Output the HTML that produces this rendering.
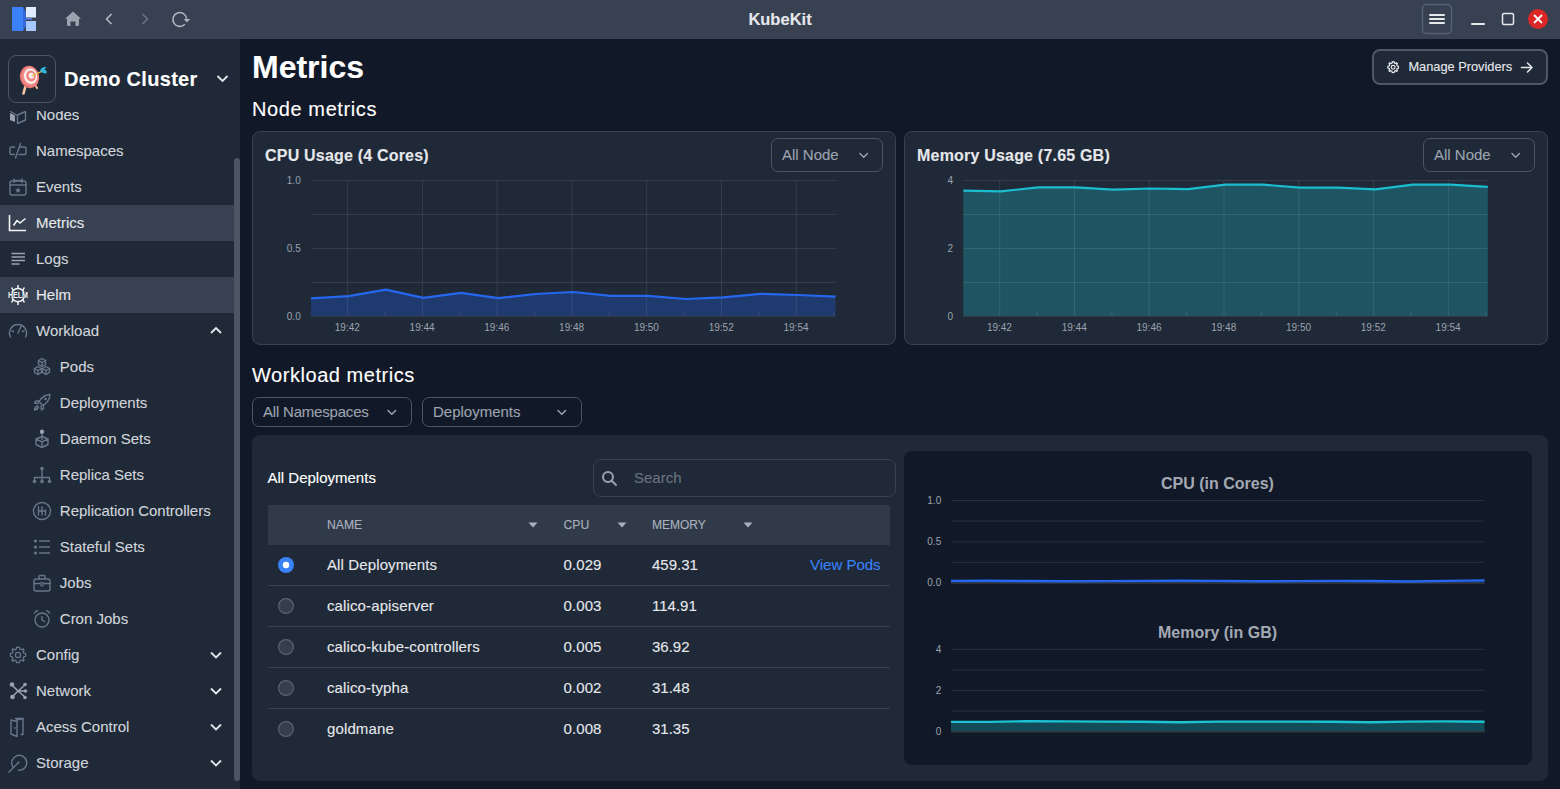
<!DOCTYPE html>
<html><head><meta charset="utf-8"><title>KubeKit</title>
<style>
html,body{margin:0;padding:0;}
body{width:1560px;height:789px;overflow:hidden;background:#111827;position:relative;font-family:"Liberation Sans",sans-serif;}
.t{position:absolute;white-space:nowrap;line-height:1;-webkit-text-stroke:0.12px currentColor;}
.n{-webkit-text-stroke:0;}
.b{position:absolute;box-sizing:border-box;}
svg.b{overflow:visible;}
</style></head><body>
<div class="b" style="left:0px;top:0px;width:1560px;height:39px;background:#374151"></div>
<svg class="b" style="left:0px;top:0px;" width="200" height="39" viewBox="0 0 200 39" >
<rect x="12" y="7" width="11" height="24" fill="#3b82f6"/>
<rect x="26" y="7" width="10" height="10.5" fill="#e0ecff"/>
<rect x="26" y="21" width="10" height="10" fill="#a5c8ff"/>
<path d="M23.5 17.5 L32 18.3 L32 19.8 L23.5 19.5 Z" fill="#5b82f0"/>
<path d="M23 7 L26 12 L26 26 L23 31 Z" fill="#3468d8"/>
<path d="M73 11.5 L65 18.8 L67 18.8 L67 24.5 Q67 26 68.5 26 L70.5 26 L70.5 21.5 L75.5 21.5 L75.5 26 L77.5 26 Q79 26 79 24.5 L79 18.8 L81 18.8 Z" fill="#9ca3af"/>
<path d="M111.5 14 L106.5 19 L111.5 24" fill="none" stroke="#b4bac4" stroke-width="1.6"/>
<path d="M142.5 14 L147.5 19 L142.5 24" fill="none" stroke="#6b7280" stroke-width="1.6"/>
<path d="M184.9 24.2 A6.9 6.9 0 1 1 186.7 18.6" fill="none" stroke="#aeb5c2" stroke-width="1.6"/>
<path d="M183.6 19 L190.1 19 L186.9 22.4 Z" fill="#aeb5c2"/>
</svg>
<div class="t" style="left:480.0px;width:600px;top:11.0px;font-size:16.5px;color:#e5e7eb;font-weight:bold;letter-spacing:0px;text-align:center">KubeKit</div>
<svg class="b" style="left:1410px;top:0px;" width="150" height="39" viewBox="0 0 150 39" >
<rect x="12.5" y="4.5" width="29" height="29" rx="4" fill="none" stroke="#556070" stroke-width="1.5"/>
<rect x="19" y="14" width="16" height="2" rx="1" fill="#e5e7eb"/>
<rect x="19" y="18" width="16" height="2" rx="1" fill="#e5e7eb"/>
<rect x="19" y="22" width="16" height="2" rx="1" fill="#e5e7eb"/>
<rect x="61" y="23" width="14" height="2" rx="1" fill="#e5e7eb"/>
<rect x="92.5" y="13.5" width="11" height="11" rx="1.5" fill="none" stroke="#e5e7eb" stroke-width="1.5"/>
<circle cx="128" cy="19" r="10" fill="#dc2626"/>
<path d="M124 15 L132 23 M132 15 L124 23" stroke="#fff" stroke-width="1.8"/>
</svg>
<div class="b" style="left:0px;top:39px;width:240px;height:750px;background:#1f2937"></div>
<div class="t" style="left:36.0px;top:106.5px;font-size:15px;color:#d1d5db;font-weight:normal;letter-spacing:0px;">Nodes</div>
<div class="t" style="left:36.0px;top:142.5px;font-size:15px;color:#d1d5db;font-weight:normal;letter-spacing:0px;">Namespaces</div>
<div class="t" style="left:36.0px;top:178.5px;font-size:15px;color:#d1d5db;font-weight:normal;letter-spacing:0px;">Events</div>
<div class="b" style="left:0px;top:205px;width:234px;height:36px;background:#374151"></div>
<div class="t" style="left:36.0px;top:214.5px;font-size:15px;color:#e5e7eb;font-weight:normal;letter-spacing:0px;">Metrics</div>
<div class="t" style="left:36.0px;top:250.5px;font-size:15px;color:#d1d5db;font-weight:normal;letter-spacing:0px;">Logs</div>
<div class="b" style="left:0px;top:277px;width:234px;height:36px;background:#374151"></div>
<div class="t" style="left:36.0px;top:286.5px;font-size:15px;color:#e5e7eb;font-weight:normal;letter-spacing:0px;">Helm</div>
<div class="t" style="left:36.0px;top:322.5px;font-size:15px;color:#d1d5db;font-weight:normal;letter-spacing:0px;">Workload</div>
<svg class="b" style="left:205px;top:323px;" width="20" height="16" viewBox="0 0 20 16" ><path d="M6 10 L11 5 L16 10" fill="none" stroke="#e5e7eb" stroke-width="1.8"/></svg>
<div class="t" style="left:59.8px;top:358.5px;font-size:15px;color:#d1d5db;font-weight:normal;letter-spacing:0px;">Pods</div>
<div class="t" style="left:59.8px;top:394.5px;font-size:15px;color:#d1d5db;font-weight:normal;letter-spacing:0px;">Deployments</div>
<div class="t" style="left:59.8px;top:430.5px;font-size:15px;color:#d1d5db;font-weight:normal;letter-spacing:0px;">Daemon Sets</div>
<div class="t" style="left:59.8px;top:466.5px;font-size:15px;color:#d1d5db;font-weight:normal;letter-spacing:0px;">Replica Sets</div>
<div class="t" style="left:59.8px;top:502.5px;font-size:15px;color:#d1d5db;font-weight:normal;letter-spacing:0px;">Replication Controllers</div>
<div class="t" style="left:59.8px;top:538.5px;font-size:15px;color:#d1d5db;font-weight:normal;letter-spacing:0px;">Stateful Sets</div>
<div class="t" style="left:59.8px;top:574.5px;font-size:15px;color:#d1d5db;font-weight:normal;letter-spacing:0px;">Jobs</div>
<div class="t" style="left:59.8px;top:610.5px;font-size:15px;color:#d1d5db;font-weight:normal;letter-spacing:0px;">Cron Jobs</div>
<div class="t" style="left:36.0px;top:646.5px;font-size:15px;color:#d1d5db;font-weight:normal;letter-spacing:0px;">Config</div>
<svg class="b" style="left:205px;top:647px;" width="20" height="16" viewBox="0 0 20 16" ><path d="M6 5.5 L11 10.5 L16 5.5" fill="none" stroke="#e5e7eb" stroke-width="1.8"/></svg>
<div class="t" style="left:36.0px;top:682.5px;font-size:15px;color:#d1d5db;font-weight:normal;letter-spacing:0px;">Network</div>
<svg class="b" style="left:205px;top:683px;" width="20" height="16" viewBox="0 0 20 16" ><path d="M6 5.5 L11 10.5 L16 5.5" fill="none" stroke="#e5e7eb" stroke-width="1.8"/></svg>
<div class="t" style="left:36.0px;top:718.5px;font-size:15px;color:#d1d5db;font-weight:normal;letter-spacing:0px;">Acess Control</div>
<svg class="b" style="left:205px;top:719px;" width="20" height="16" viewBox="0 0 20 16" ><path d="M6 5.5 L11 10.5 L16 5.5" fill="none" stroke="#e5e7eb" stroke-width="1.8"/></svg>
<div class="t" style="left:36.0px;top:754.5px;font-size:15px;color:#d1d5db;font-weight:normal;letter-spacing:0px;">Storage</div>
<svg class="b" style="left:205px;top:755px;" width="20" height="16" viewBox="0 0 20 16" ><path d="M6 5.5 L11 10.5 L16 5.5" fill="none" stroke="#e5e7eb" stroke-width="1.8"/></svg>
<svg class="b" style="left:6.0px;top:103.0px;" width="24" height="24" viewBox="0 0 24 24" ><path d="M4 10 L9 12.5 L9 19 L4 17 Z" fill="#9ca3af"/><path d="M4.5 8.5 L10.5 12" fill="none" stroke="#6a7689" stroke-width="1.4" stroke-linecap="round" stroke-linejoin="round" stroke-width="1.2"/><path d="M11.5 12 L19.5 8.5 L19.5 17 L11.5 20.5 Z" fill="none" stroke="#6a7689" stroke-width="1.4" stroke-linecap="round" stroke-linejoin="round" stroke-width="1.3"/></svg>
<svg class="b" style="left:6.0px;top:139.0px;" width="24" height="24" viewBox="0 0 24 24" ><path d="M8.5 8 L5.5 8 Q4 8 4 9.5 L4 14 Q4 15.5 5.5 15.5 L8.5 15.5" fill="none" stroke="#6a7689" stroke-width="1.4" stroke-linecap="round" stroke-linejoin="round"/><path d="M14.5 4.5 L9.5 19" fill="none" stroke="#6a7689" stroke-width="1.4" stroke-linecap="round" stroke-linejoin="round"/><path d="M14 8 L18.5 8 Q20 8 20 9.5 L20 14 Q20 15.5 18.5 15.5 L13 15.5" fill="none" stroke="#6a7689" stroke-width="1.4" stroke-linecap="round" stroke-linejoin="round"/></svg>
<svg class="b" style="left:6.0px;top:175.0px;" width="24" height="24" viewBox="0 0 24 24" ><rect x="4" y="6" width="16" height="14" rx="2" fill="none" stroke="#6a7689" stroke-width="1.4" stroke-linecap="round" stroke-linejoin="round"/><path d="M4 10 L20 10 M8 4 L8 7.5 M16 4 L16 7.5 M9 5.5 L15 5.5" fill="none" stroke="#6a7689" stroke-width="1.4" stroke-linecap="round" stroke-linejoin="round"/><path d="M12 12.3 L12.9 14.3 L15 14.5 L13.4 15.8 L13.9 17.8 L12 16.7 L10.1 17.8 L10.6 15.8 L9 14.5 L11.1 14.3 Z" fill="#6a7689"/></svg>
<svg class="b" style="left:6.0px;top:211.0px;" width="24" height="24" viewBox="0 0 24 24" ><path d="M3.5 4 L3.5 19.5 L20 19.5" fill="none" stroke="#f3f4f6" stroke-width="1.6"/><path d="M7.5 14.5 L11 9.5 L14 12 L19.5 7.5" fill="none" stroke="#f3f4f6" stroke-width="1.6" stroke-linejoin="round"/></svg>
<svg class="b" style="left:6.0px;top:247.0px;" width="24" height="24" viewBox="0 0 24 24" ><path d="M5.5 6.5 L19 6.5 M5.5 10 L19 10 M5.5 13.5 L19 13.5 M5.5 17 L13.5 17" fill="none" stroke="#9ca3af" stroke-width="1.3"/></svg>
<svg class="b" style="left:5.0px;top:283.0px;" width="26" height="24" viewBox="0 0 26 24" ><g stroke="#f3f4f6" stroke-width="1.5" fill="none"><path d="M7.1 9.6 A6.3 6.3 0 0 1 18.9 9.6"/><path d="M7.1 14.4 A6.3 6.3 0 0 0 18.9 14.4"/><path d="M13 2 L13 5.8 M13 18.2 L13 22 M8.4 7.7 L6.6 4.5 M17.6 7.7 L19.4 4.5 M8.4 16.3 L6.6 19.5 M17.6 16.3 L19.4 19.5"/></g><text x="3" y="15" textLength="20" lengthAdjust="spacingAndGlyphs" font-family="Liberation Sans" font-weight="bold" font-size="8.4" fill="#f3f4f6">HELM</text></svg>
<svg class="b" style="left:6.0px;top:319.0px;" width="24" height="24" viewBox="0 0 24 24" ><path d="M4.5 18 A8.5 8.5 0 1 1 19.5 18" fill="none" stroke="#6a7689" stroke-width="1.4" stroke-linecap="round" stroke-linejoin="round"/><path d="M12 14 L15 7.5" fill="none" stroke="#6a7689" stroke-width="1.4" stroke-linecap="round" stroke-linejoin="round"/><path d="M6 12 L7.5 12.5 M18 12 L16.5 12.5" fill="none" stroke="#6a7689" stroke-width="1.4" stroke-linecap="round" stroke-linejoin="round"/></svg>
<svg class="b" style="left:30.0px;top:355.0px;" width="24" height="24" viewBox="0 0 24 24" ><path d="M12 3.5 L15.5 5.5 L15.5 9.5 L12 11.5 L8.5 9.5 L8.5 5.5 Z M8 11.5 L11.5 13.5 L11.5 17.5 L8 19.5 L4.5 17.5 L4.5 13.5 Z M16 11.5 L19.5 13.5 L19.5 17.5 L16 19.5 L12.5 17.5 L12.5 13.5 Z" fill="none" stroke="#6a7689" stroke-width="1.4" stroke-linecap="round" stroke-linejoin="round"/><path d="M8.5 5.5 L12 7.5 L15.5 5.5 M12 7.5 L12 11.5 M4.5 13.5 L8 15.5 L11.5 13.5 M8 15.5 L8 19.5 M12.5 13.5 L16 15.5 L19.5 13.5 M16 15.5 L16 19.5" fill="none" stroke="#6a7689" stroke-width="1.4" stroke-linecap="round" stroke-linejoin="round" stroke-width="1"/></svg>
<svg class="b" style="left:30.0px;top:391.0px;" width="24" height="24" viewBox="0 0 24 24" ><path d="M20 3.5 Q13 4 9 10.5 L13 14.5 Q19.5 10.5 20 3.5 Z" fill="none" stroke="#6a7689" stroke-width="1.4" stroke-linecap="round" stroke-linejoin="round"/><path d="M9.5 10 L6 10 L4.5 12 L8.5 12.5 M13.5 14 L13.5 17.5 L11.5 19 L11 15" fill="none" stroke="#6a7689" stroke-width="1.4" stroke-linecap="round" stroke-linejoin="round"/><circle cx="15.5" cy="8" r="1.3" fill="#6a7689"/><path d="M7.5 15 Q5 15.5 4.5 19 Q8 18.5 8.5 16" fill="none" stroke="#6a7689" stroke-width="1.4" stroke-linecap="round" stroke-linejoin="round" fill="#9ca3af"/></svg>
<svg class="b" style="left:30.0px;top:427.0px;" width="24" height="24" viewBox="0 0 24 24" ><circle cx="12" cy="4.8" r="2.2" fill="#9ca3af"/><path d="M12 7 L12 12.5" fill="none" stroke="#6a7689" stroke-width="1.4" stroke-linecap="round" stroke-linejoin="round"/><path d="M6 12 L12 9.5 L18 12 L18 17.5 L12 20.5 L6 17.5 Z M6 12 L12 14.8 L18 12 M12 14.8 L12 20.5" fill="none" stroke="#6a7689" stroke-width="1.4" stroke-linecap="round" stroke-linejoin="round"/></svg>
<svg class="b" style="left:30.0px;top:463.0px;" width="24" height="24" viewBox="0 0 24 24" ><circle cx="12" cy="5.5" r="1.8" fill="#6a7689"/><circle cx="4.5" cy="18.5" r="1.8" fill="#6a7689"/><circle cx="12" cy="18.5" r="1.8" fill="#6a7689"/><circle cx="19.5" cy="18.5" r="1.8" fill="#6a7689"/><path d="M12 6 L12 18 M4.5 18 L4.5 14.5 L19.5 14.5 L19.5 18" fill="none" stroke="#6a7689" stroke-width="1.4" stroke-linecap="round" stroke-linejoin="round"/></svg>
<svg class="b" style="left:30.0px;top:499.0px;" width="24" height="24" viewBox="0 0 24 24" ><circle cx="12" cy="12" r="8.5" fill="none" stroke="#6a7689" stroke-width="1.4" stroke-linecap="round" stroke-linejoin="round"/><path d="M8.5 8 L8.5 16 M12 8 L12 16 M15.5 11 L15.5 16 M8.5 12 L15.5 12" fill="none" stroke="#6a7689" stroke-width="1.4" stroke-linecap="round" stroke-linejoin="round"/></svg>
<svg class="b" style="left:30.0px;top:535.0px;" width="24" height="24" viewBox="0 0 24 24" ><circle cx="5.5" cy="6" r="1.6" fill="#6a7689"/><circle cx="5.5" cy="12" r="1.6" fill="#6a7689"/><circle cx="5.5" cy="18" r="1.6" fill="#6a7689"/><path d="M9.5 6 L19.5 6 M9.5 12 L19.5 12 M9.5 18 L19.5 18" fill="none" stroke="#6a7689" stroke-width="1.4" stroke-linecap="round" stroke-linejoin="round"/></svg>
<svg class="b" style="left:30.0px;top:571.0px;" width="24" height="24" viewBox="0 0 24 24" ><rect x="4" y="8" width="16" height="12" rx="2" fill="none" stroke="#6a7689" stroke-width="1.4" stroke-linecap="round" stroke-linejoin="round"/><path d="M9 8 L9 5.5 Q9 4.5 10 4.5 L14 4.5 Q15 4.5 15 5.5 L15 8 M4 12.5 L20 12.5" fill="none" stroke="#6a7689" stroke-width="1.4" stroke-linecap="round" stroke-linejoin="round"/><rect x="10.8" y="11.5" width="2.4" height="3.5" rx="0.8" fill="#1f2937" stroke="#6a7689" stroke-width="1.1"/></svg>
<svg class="b" style="left:30.0px;top:607.0px;" width="24" height="24" viewBox="0 0 24 24" ><circle cx="12" cy="13" r="7" fill="none" stroke="#6a7689" stroke-width="1.4" stroke-linecap="round" stroke-linejoin="round"/><path d="M12 9.5 L12 13 L14.5 14.5 M4.5 6 Q5.5 4 7.5 3.8 M19.5 6 Q18.5 4 16.5 3.8" fill="none" stroke="#6a7689" stroke-width="1.4" stroke-linecap="round" stroke-linejoin="round"/></svg>
<svg class="b" style="left:6.0px;top:643.0px;" width="24" height="24" viewBox="0 0 24 24" ><g transform="translate(12 12) scale(0.9) translate(-12 -12)"><path d="M12 3.2 L13.6 3.4 L14.1 5.5 L15.6 6.2 L17.4 5 L18.7 6.3 L17.6 8.1 L18.3 9.8 L20.4 10.3 L20.6 12 L20.4 13.6 L18.3 14.1 L17.6 15.8 L18.8 17.6 L17.6 18.8 L15.8 17.6 L14.1 18.3 L13.6 20.4 L12 20.6 L10.4 20.4 L9.9 18.3 L8.2 17.6 L6.4 18.8 L5.2 17.6 L6.4 15.8 L5.7 14.1 L3.6 13.6 L3.4 12 L3.6 10.4 L5.7 9.9 L6.4 8.1 L5.3 6.3 L6.5 5.1 L8.3 6.3 L9.9 5.6 L10.4 3.4 Z" fill="none" stroke="#6a7689" stroke-width="1.4" stroke-linecap="round" stroke-linejoin="round" stroke-width="1.3"/><circle cx="12" cy="12" r="2.9" fill="none" stroke="#6a7689" stroke-width="1.4" stroke-linecap="round" stroke-linejoin="round" stroke-width="1.4"/></g></svg>
<svg class="b" style="left:6.0px;top:679.0px;" width="24" height="24" viewBox="0 0 24 24" ><path d="M6 6 L12 12 L6 18 M12 12 L19 6 M12 12 L19.5 12 M12 12 L19 18" fill="none" stroke="#9ca3af" stroke-width="1.5"/><circle cx="6" cy="5.5" r="2.3" fill="#9ca3af"/><circle cx="6.5" cy="18" r="2.3" fill="#9ca3af"/><circle cx="19" cy="5.5" r="1.8" fill="#9ca3af"/><circle cx="19.5" cy="12" r="1.8" fill="#9ca3af"/><circle cx="19" cy="18.5" r="1.8" fill="#9ca3af"/></svg>
<svg class="b" style="left:6.0px;top:715.0px;" width="24" height="24" viewBox="0 0 24 24" ><path d="M10.5 5 L17 3.5 L17 19.5 L15 19.5 M5 5 L5 19 L11 21.5 L11 6.5 Z" fill="none" stroke="#6a7689" stroke-width="1.4" stroke-linecap="round" stroke-linejoin="round"/><path d="M9.5 3.5 L17 3.5" fill="none" stroke="#6a7689" stroke-width="1.4" stroke-linecap="round" stroke-linejoin="round"/><circle cx="8.8" cy="13" r="0.9" fill="#6a7689"/></svg>
<svg class="b" style="left:6.0px;top:751.0px;" width="24" height="24" viewBox="0 0 24 24" ><path d="M7 16 A7.5 7.5 0 1 1 12.5 19.3" fill="none" stroke="#6a7689" stroke-width="1.4" stroke-linecap="round" stroke-linejoin="round"/><circle cx="12.5" cy="11.5" r="1" fill="#6a7689"/><path d="M12 12 L3 21" fill="none" stroke="#6a7689" stroke-width="1.4" stroke-linecap="round" stroke-linejoin="round" stroke="#9ca3af"/></svg>
<div class="b" style="left:234px;top:158px;width:6px;height:623px;background:#4b5563;border-radius:3px"></div>
<div class="b" style="left:0px;top:39px;width:234px;height:72px;background:#1f2937"></div>
<div class="b" style="left:8px;top:55px;width:48px;height:48px;border:1px solid #4b5563;border-radius:8px"></div>
<div class="t" style="left:64.0px;top:68.9px;font-size:20px;color:#ffffff;font-weight:bold;letter-spacing:0.3px;">Demo Cluster</div>
<svg class="b" style="left:210px;top:70px;" width="24" height="16" viewBox="0 0 24 16" ><path d="M7.5 6 L12.5 11 L17.5 6" fill="none" stroke="#e5e7eb" stroke-width="1.8"/></svg>
<div class="t" style="left:252.0px;top:50.9px;font-size:32px;color:#ffffff;font-weight:bold;letter-spacing:0px;">Metrics</div>
<div class="b" style="left:1372px;top:49px;width:176px;height:36px;background:#1f2937;border:2px solid #4f5866;border-radius:8px"></div>
<div class="t" style="left:1408.4px;top:61.2px;font-size:12.8px;color:#e5e7eb;font-weight:normal;letter-spacing:0px;">Manage Providers</div>
<div class="t" style="left:252.0px;top:98.6px;font-size:20px;color:#ffffff;font-weight:normal;letter-spacing:0.6px;">Node metrics</div>
<div class="b" style="left:252px;top:131px;width:644px;height:214px;background:#1f2937;border:1px solid #374151;border-radius:8px"></div>
<div class="b" style="left:904px;top:131px;width:644px;height:214px;background:#1f2937;border:1px solid #374151;border-radius:8px"></div>
<div class="t" style="left:265.0px;top:147.5px;font-size:16px;color:#e5e7eb;font-weight:bold;letter-spacing:0.2px;">CPU Usage (4 Cores)</div>
<div class="t" style="left:917.0px;top:147.5px;font-size:16px;color:#e5e7eb;font-weight:bold;letter-spacing:0.2px;">Memory Usage (7.65 GB)</div>
<div class="b" style="left:771px;top:138px;width:112px;height:34px;border:1px solid #4b5563;border-radius:7px"></div>
<div class="b" style="left:1423px;top:138px;width:112px;height:34px;border:1px solid #4b5563;border-radius:7px"></div>
<div class="t" style="left:782.0px;top:147.3px;font-size:15px;color:#9ca3af;font-weight:normal;letter-spacing:0px;">All Node</div>
<div class="t" style="left:1434.0px;top:147.3px;font-size:15px;color:#9ca3af;font-weight:normal;letter-spacing:0px;">All Node</div>
<div class="t" style="left:252.0px;top:365.1px;font-size:20px;color:#ffffff;font-weight:normal;letter-spacing:0.55px;">Workload metrics</div>
<div class="b" style="left:252px;top:397px;width:160px;height:30px;border:1px solid #4b5563;border-radius:7px"></div>
<div class="b" style="left:422px;top:397px;width:160px;height:30px;border:1px solid #4b5563;border-radius:7px"></div>
<div class="t" style="left:263.0px;top:403.6px;font-size:15px;color:#9ca3af;font-weight:normal;letter-spacing:-0.2px;">All Namespaces</div>
<div class="t" style="left:433.0px;top:403.6px;font-size:15px;color:#9ca3af;font-weight:normal;letter-spacing:0px;">Deployments</div>
<div class="b" style="left:252px;top:435px;width:1296px;height:346px;background:#1f2937;border-radius:8px"></div>
<div class="t" style="left:267.5px;top:469.9px;font-size:15px;color:#ffffff;font-weight:normal;letter-spacing:0px;">All Deployments</div>
<div class="b" style="left:593px;top:459px;width:303px;height:38px;border:1px solid #374151;border-radius:8px"></div>
<div class="t" style="left:634.0px;top:469.7px;font-size:15px;color:#6b7280;font-weight:normal;letter-spacing:0px;">Search</div>
<div class="b" style="left:268px;top:505px;width:622px;height:40px;background:#303a49"></div>
<div class="t" style="left:327.0px;top:518.9px;font-size:12.2px;color:#aab1bd;font-weight:normal;letter-spacing:0px;">NAME</div>
<div class="t" style="left:563.5px;top:518.9px;font-size:12.2px;color:#aab1bd;font-weight:normal;letter-spacing:0px;">CPU</div>
<div class="t" style="left:652.0px;top:519.0px;font-size:12px;color:#aab1bd;font-weight:normal;letter-spacing:0px;">MEMORY</div>
<div class="t" style="left:327.0px;top:557.3px;font-size:15px;color:#e5e7eb;font-weight:normal;letter-spacing:0.12px;">All Deployments</div>
<div class="t" style="left:563.5px;top:557.3px;font-size:15px;color:#e5e7eb;font-weight:normal;letter-spacing:0.1px;">0.029</div>
<div class="t" style="left:652.0px;top:557.3px;font-size:15px;color:#e5e7eb;font-weight:normal;letter-spacing:0px;">459.31</div>
<div class="b" style="left:268px;top:585px;width:622px;height:1px;background:#374151"></div>
<div class="t" style="left:327.0px;top:598.3px;font-size:15px;color:#e5e7eb;font-weight:normal;letter-spacing:0.12px;">calico-apiserver</div>
<div class="t" style="left:563.5px;top:598.3px;font-size:15px;color:#e5e7eb;font-weight:normal;letter-spacing:0.1px;">0.003</div>
<div class="t" style="left:652.0px;top:598.3px;font-size:15px;color:#e5e7eb;font-weight:normal;letter-spacing:0px;">114.91</div>
<div class="b" style="left:268px;top:626px;width:622px;height:1px;background:#374151"></div>
<div class="t" style="left:327.0px;top:639.3px;font-size:15px;color:#e5e7eb;font-weight:normal;letter-spacing:0.12px;">calico-kube-controllers</div>
<div class="t" style="left:563.5px;top:639.3px;font-size:15px;color:#e5e7eb;font-weight:normal;letter-spacing:0.1px;">0.005</div>
<div class="t" style="left:652.0px;top:639.3px;font-size:15px;color:#e5e7eb;font-weight:normal;letter-spacing:0px;">36.92</div>
<div class="b" style="left:268px;top:667px;width:622px;height:1px;background:#374151"></div>
<div class="t" style="left:327.0px;top:680.3px;font-size:15px;color:#e5e7eb;font-weight:normal;letter-spacing:0.12px;">calico-typha</div>
<div class="t" style="left:563.5px;top:680.3px;font-size:15px;color:#e5e7eb;font-weight:normal;letter-spacing:0.1px;">0.002</div>
<div class="t" style="left:652.0px;top:680.3px;font-size:15px;color:#e5e7eb;font-weight:normal;letter-spacing:0px;">31.48</div>
<div class="b" style="left:268px;top:708px;width:622px;height:1px;background:#374151"></div>
<div class="t" style="left:327.0px;top:721.3px;font-size:15px;color:#e5e7eb;font-weight:normal;letter-spacing:0.12px;">goldmane</div>
<div class="t" style="left:563.5px;top:721.3px;font-size:15px;color:#e5e7eb;font-weight:normal;letter-spacing:0.1px;">0.008</div>
<div class="t" style="left:652.0px;top:721.3px;font-size:15px;color:#e5e7eb;font-weight:normal;letter-spacing:0px;">31.35</div>
<div class="t" style="left:810.0px;top:557.3px;font-size:15px;color:#3b82f6;font-weight:normal;letter-spacing:0px;">View Pods</div>
<div class="b" style="left:904px;top:451px;width:628px;height:314px;background:#111827;border-radius:8px"></div>
<div class="t n" style="left:917.5px;width:600px;top:475.8px;font-size:16px;color:#a3a9b3;font-weight:bold;letter-spacing:0px;text-align:center">CPU (in Cores)</div>
<div class="t n" style="left:917.5px;width:600px;top:624.5px;font-size:16px;color:#a3a9b3;font-weight:bold;letter-spacing:0px;text-align:center">Memory (in GB)</div>
<svg class="b" style="left:0px;top:0px;pointer-events:none" width="1560" height="789" viewBox="0 0 1560 789" ><path d="M311.0 298.4 L348.5 296.1 L385.9 289.7 L423.4 297.8 L460.9 292.9 L498.3 298.1 L535.8 294.0 L573.2 292.0 L610.7 295.8 L648.2 295.8 L685.6 299.0 L723.1 297.3 L760.6 293.8 L798.0 295.0 L835.5 296.7 L835.5 316 L311.0 316 Z" fill="#1e3a6e"/><line x1="311" y1="180.5" x2="835.5" y2="180.5" stroke="rgba(255,255,255,0.095)" stroke-width="1"/><line x1="311" y1="214.5" x2="835.5" y2="214.5" stroke="rgba(255,255,255,0.095)" stroke-width="1"/><line x1="311" y1="248.5" x2="835.5" y2="248.5" stroke="rgba(255,255,255,0.095)" stroke-width="1"/><line x1="311" y1="282.5" x2="835.5" y2="282.5" stroke="rgba(255,255,255,0.095)" stroke-width="1"/><line x1="311" y1="316.5" x2="835.5" y2="316.5" stroke="rgba(255,255,255,0.095)" stroke-width="1"/><line x1="347.6" y1="180" x2="347.6" y2="316" stroke="rgba(255,255,255,0.095)" stroke-width="1"/><line x1="422.4" y1="180" x2="422.4" y2="316" stroke="rgba(255,255,255,0.095)" stroke-width="1"/><line x1="497.1" y1="180" x2="497.1" y2="316" stroke="rgba(255,255,255,0.095)" stroke-width="1"/><line x1="571.9" y1="180" x2="571.9" y2="316" stroke="rgba(255,255,255,0.095)" stroke-width="1"/><line x1="646.7" y1="180" x2="646.7" y2="316" stroke="rgba(255,255,255,0.095)" stroke-width="1"/><line x1="721.5" y1="180" x2="721.5" y2="316" stroke="rgba(255,255,255,0.095)" stroke-width="1"/><line x1="796.3" y1="180" x2="796.3" y2="316" stroke="rgba(255,255,255,0.095)" stroke-width="1"/><line x1="385.0" y1="312" x2="385.0" y2="316" stroke="rgba(255,255,255,0.095)" stroke-width="1"/><line x1="459.8" y1="312" x2="459.8" y2="316" stroke="rgba(255,255,255,0.095)" stroke-width="1"/><line x1="534.5" y1="312" x2="534.5" y2="316" stroke="rgba(255,255,255,0.095)" stroke-width="1"/><line x1="609.3" y1="312" x2="609.3" y2="316" stroke="rgba(255,255,255,0.095)" stroke-width="1"/><line x1="684.1" y1="312" x2="684.1" y2="316" stroke="rgba(255,255,255,0.095)" stroke-width="1"/><line x1="758.9" y1="312" x2="758.9" y2="316" stroke="rgba(255,255,255,0.095)" stroke-width="1"/><line x1="833.7" y1="312" x2="833.7" y2="316" stroke="rgba(255,255,255,0.095)" stroke-width="1"/><path d="M311.0 298.4 L348.5 296.1 L385.9 289.7 L423.4 297.8 L460.9 292.9 L498.3 298.1 L535.8 294.0 L573.2 292.0 L610.7 295.8 L648.2 295.8 L685.6 299.0 L723.1 297.3 L760.6 293.8 L798.0 295.0 L835.5 296.7" fill="none" stroke="#2667f0" stroke-width="2.2" stroke-linejoin="round"/><line x1="311" y1="316.5" x2="835.5" y2="316.5" stroke="#35373a" stroke-width="1.2"/></svg>
<div class="t n" style="right:1259.3px;top:176.1px;font-size:10px;color:#9ca3af;font-weight:normal;letter-spacing:0px;text-align:right">1.0</div>
<div class="t n" style="right:1259.3px;top:244.1px;font-size:10px;color:#9ca3af;font-weight:normal;letter-spacing:0px;text-align:right">0.5</div>
<div class="t n" style="right:1259.3px;top:312.1px;font-size:10px;color:#9ca3af;font-weight:normal;letter-spacing:0px;text-align:right">0.0</div>
<div class="t n" style="left:47.3px;width:600px;top:323.1px;font-size:10px;color:#9ca3af;font-weight:normal;letter-spacing:0px;text-align:center">19:42</div>
<div class="t n" style="left:122.1px;width:600px;top:323.1px;font-size:10px;color:#9ca3af;font-weight:normal;letter-spacing:0px;text-align:center">19:44</div>
<div class="t n" style="left:196.8px;width:600px;top:323.1px;font-size:10px;color:#9ca3af;font-weight:normal;letter-spacing:0px;text-align:center">19:46</div>
<div class="t n" style="left:271.6px;width:600px;top:323.1px;font-size:10px;color:#9ca3af;font-weight:normal;letter-spacing:0px;text-align:center">19:48</div>
<div class="t n" style="left:346.4px;width:600px;top:323.1px;font-size:10px;color:#9ca3af;font-weight:normal;letter-spacing:0px;text-align:center">19:50</div>
<div class="t n" style="left:421.2px;width:600px;top:323.1px;font-size:10px;color:#9ca3af;font-weight:normal;letter-spacing:0px;text-align:center">19:52</div>
<div class="t n" style="left:496.0px;width:600px;top:323.1px;font-size:10px;color:#9ca3af;font-weight:normal;letter-spacing:0px;text-align:center">19:54</div>
<svg class="b" style="left:0px;top:0px;pointer-events:none" width="1560" height="789" viewBox="0 0 1560 789" ><path d="M963.3 190.6 L1000.8 191.4 L1038.2 187.3 L1075.7 187.3 L1113.2 189.7 L1150.6 188.5 L1188.1 189.1 L1225.5 184.7 L1263.0 184.7 L1300.5 187.6 L1337.9 187.6 L1375.4 189.4 L1412.9 184.7 L1450.3 184.7 L1487.8 186.8 L1487.8 316 L963.3 316 Z" fill="#1f5563"/><line x1="963.3" y1="180.5" x2="1487.8" y2="180.5" stroke="rgba(255,255,255,0.095)" stroke-width="1"/><line x1="963.3" y1="214.5" x2="1487.8" y2="214.5" stroke="rgba(255,255,255,0.095)" stroke-width="1"/><line x1="963.3" y1="248.5" x2="1487.8" y2="248.5" stroke="rgba(255,255,255,0.095)" stroke-width="1"/><line x1="963.3" y1="282.5" x2="1487.8" y2="282.5" stroke="rgba(255,255,255,0.095)" stroke-width="1"/><line x1="963.3" y1="316.5" x2="1487.8" y2="316.5" stroke="rgba(255,255,255,0.095)" stroke-width="1"/><line x1="999.7" y1="180" x2="999.7" y2="316" stroke="rgba(255,255,255,0.095)" stroke-width="1"/><line x1="1074.5" y1="180" x2="1074.5" y2="316" stroke="rgba(255,255,255,0.095)" stroke-width="1"/><line x1="1149.2" y1="180" x2="1149.2" y2="316" stroke="rgba(255,255,255,0.095)" stroke-width="1"/><line x1="1224.0" y1="180" x2="1224.0" y2="316" stroke="rgba(255,255,255,0.095)" stroke-width="1"/><line x1="1298.8" y1="180" x2="1298.8" y2="316" stroke="rgba(255,255,255,0.095)" stroke-width="1"/><line x1="1373.6" y1="180" x2="1373.6" y2="316" stroke="rgba(255,255,255,0.095)" stroke-width="1"/><line x1="1448.4" y1="180" x2="1448.4" y2="316" stroke="rgba(255,255,255,0.095)" stroke-width="1"/><line x1="1037.1" y1="312" x2="1037.1" y2="316" stroke="rgba(255,255,255,0.095)" stroke-width="1"/><line x1="1111.9" y1="312" x2="1111.9" y2="316" stroke="rgba(255,255,255,0.095)" stroke-width="1"/><line x1="1186.6" y1="312" x2="1186.6" y2="316" stroke="rgba(255,255,255,0.095)" stroke-width="1"/><line x1="1261.4" y1="312" x2="1261.4" y2="316" stroke="rgba(255,255,255,0.095)" stroke-width="1"/><line x1="1336.2" y1="312" x2="1336.2" y2="316" stroke="rgba(255,255,255,0.095)" stroke-width="1"/><line x1="1411.0" y1="312" x2="1411.0" y2="316" stroke="rgba(255,255,255,0.095)" stroke-width="1"/><line x1="1485.8" y1="312" x2="1485.8" y2="316" stroke="rgba(255,255,255,0.095)" stroke-width="1"/><path d="M963.3 190.6 L1000.8 191.4 L1038.2 187.3 L1075.7 187.3 L1113.2 189.7 L1150.6 188.5 L1188.1 189.1 L1225.5 184.7 L1263.0 184.7 L1300.5 187.6 L1337.9 187.6 L1375.4 189.4 L1412.9 184.7 L1450.3 184.7 L1487.8 186.8" fill="none" stroke="#1bbdd0" stroke-width="2.2" stroke-linejoin="round"/><line x1="963.3" y1="316.5" x2="1487.8" y2="316.5" stroke="#35373a" stroke-width="1.2"/></svg>
<div class="t n" style="right:607.0px;top:176.1px;font-size:10px;color:#9ca3af;font-weight:normal;letter-spacing:0px;text-align:right">4</div>
<div class="t n" style="right:607.0px;top:244.1px;font-size:10px;color:#9ca3af;font-weight:normal;letter-spacing:0px;text-align:right">2</div>
<div class="t n" style="right:607.0px;top:312.1px;font-size:10px;color:#9ca3af;font-weight:normal;letter-spacing:0px;text-align:right">0</div>
<div class="t n" style="left:699.4px;width:600px;top:323.1px;font-size:10px;color:#9ca3af;font-weight:normal;letter-spacing:0px;text-align:center">19:42</div>
<div class="t n" style="left:774.2px;width:600px;top:323.1px;font-size:10px;color:#9ca3af;font-weight:normal;letter-spacing:0px;text-align:center">19:44</div>
<div class="t n" style="left:849.0px;width:600px;top:323.1px;font-size:10px;color:#9ca3af;font-weight:normal;letter-spacing:0px;text-align:center">19:46</div>
<div class="t n" style="left:923.7px;width:600px;top:323.1px;font-size:10px;color:#9ca3af;font-weight:normal;letter-spacing:0px;text-align:center">19:48</div>
<div class="t n" style="left:998.5px;width:600px;top:323.1px;font-size:10px;color:#9ca3af;font-weight:normal;letter-spacing:0px;text-align:center">19:50</div>
<div class="t n" style="left:1073.3px;width:600px;top:323.1px;font-size:10px;color:#9ca3af;font-weight:normal;letter-spacing:0px;text-align:center">19:52</div>
<div class="t n" style="left:1148.1px;width:600px;top:323.1px;font-size:10px;color:#9ca3af;font-weight:normal;letter-spacing:0px;text-align:center">19:54</div>
<svg class="b" style="left:0px;top:0px;pointer-events:none" width="1560" height="789" viewBox="0 0 1560 789" ><line x1="951" y1="500.5" x2="1484.5" y2="500.5" stroke="#252f3d" stroke-width="1"/><line x1="951" y1="521.1" x2="1484.5" y2="521.1" stroke="#252f3d" stroke-width="1"/><line x1="951" y1="541.8" x2="1484.5" y2="541.8" stroke="#252f3d" stroke-width="1"/><line x1="951" y1="562.4" x2="1484.5" y2="562.4" stroke="#252f3d" stroke-width="1"/><line x1="951" y1="583.0" x2="1484.5" y2="583.0" stroke="#252f3d" stroke-width="1"/><path d="M951.0 580.9 L989.1 580.8 L1027.2 581.0 L1065.3 581.3 L1103.4 581.1 L1141.5 580.9 L1179.6 580.8 L1217.8 580.9 L1255.9 581.3 L1294.0 581.1 L1332.1 580.9 L1370.2 581.0 L1408.3 581.5 L1446.4 580.9 L1484.5 580.4 L1484.5 583 L951 583 Z" fill="rgba(37,99,235,0.3)"/><line x1="951" y1="583.2" x2="1484.5" y2="583.2" stroke="#35373a" stroke-width="1.2"/><path d="M951.0 580.9 L989.1 580.8 L1027.2 581.0 L1065.3 581.3 L1103.4 581.1 L1141.5 580.9 L1179.6 580.8 L1217.8 580.9 L1255.9 581.3 L1294.0 581.1 L1332.1 580.9 L1370.2 581.0 L1408.3 581.5 L1446.4 580.9 L1484.5 580.4" fill="none" stroke="#2667f0" stroke-width="2.4" stroke-linejoin="round"/></svg>
<div class="t n" style="right:618.8px;top:495.6px;font-size:10px;color:#9ca3af;font-weight:normal;letter-spacing:0px;text-align:right">1.0</div>
<div class="t n" style="right:618.8px;top:536.9px;font-size:10px;color:#9ca3af;font-weight:normal;letter-spacing:0px;text-align:right">0.5</div>
<div class="t n" style="right:618.8px;top:578.1px;font-size:10px;color:#9ca3af;font-weight:normal;letter-spacing:0px;text-align:right">0.0</div>
<svg class="b" style="left:0px;top:0px;pointer-events:none" width="1560" height="789" viewBox="0 0 1560 789" ><line x1="951" y1="649.4" x2="1484.5" y2="649.4" stroke="#252f3d" stroke-width="1"/><line x1="951" y1="670.0" x2="1484.5" y2="670.0" stroke="#252f3d" stroke-width="1"/><line x1="951" y1="690.5" x2="1484.5" y2="690.5" stroke="#252f3d" stroke-width="1"/><line x1="951" y1="711.0" x2="1484.5" y2="711.0" stroke="#252f3d" stroke-width="1"/><line x1="951" y1="731.6" x2="1484.5" y2="731.6" stroke="#252f3d" stroke-width="1"/><path d="M951.0 721.9 L989.1 721.9 L1027.2 721.2 L1065.3 721.4 L1103.4 721.6 L1141.5 721.7 L1179.6 722.3 L1217.8 721.6 L1255.9 721.6 L1294.0 721.6 L1332.1 721.8 L1370.2 722.3 L1408.3 721.6 L1446.4 721.4 L1484.5 721.7 L1484.5 731.6 L951 731.6 Z" fill="#134c58"/><line x1="951" y1="731.8" x2="1484.5" y2="731.8" stroke="#35373a" stroke-width="1.2"/><path d="M951.0 721.9 L989.1 721.9 L1027.2 721.2 L1065.3 721.4 L1103.4 721.6 L1141.5 721.7 L1179.6 722.3 L1217.8 721.6 L1255.9 721.6 L1294.0 721.6 L1332.1 721.8 L1370.2 722.3 L1408.3 721.6 L1446.4 721.4 L1484.5 721.7" fill="none" stroke="#1bc3d4" stroke-width="2.4" stroke-linejoin="round"/></svg>
<div class="t n" style="right:618.8px;top:644.5px;font-size:10px;color:#9ca3af;font-weight:normal;letter-spacing:0px;text-align:right">4</div>
<div class="t n" style="right:618.8px;top:685.6px;font-size:10px;color:#9ca3af;font-weight:normal;letter-spacing:0px;text-align:right">2</div>
<div class="t n" style="right:618.8px;top:726.7px;font-size:10px;color:#9ca3af;font-weight:normal;letter-spacing:0px;text-align:right">0</div>
<svg class="b" style="left:8px;top:55px;" width="48" height="48" viewBox="0 0 48 48" >
<path d="M17.5 31 L15.5 38.5" stroke="#f4c7a1" stroke-width="2.6" stroke-linecap="round"/>
<path d="M27.5 30.5 L29 33" stroke="#e8b48e" stroke-width="2.2" stroke-linecap="round"/>
<ellipse cx="21.5" cy="22" rx="9.6" ry="11.2" transform="rotate(-12 21.5 22)" fill="#e46f6f"/>
<ellipse cx="22" cy="21.5" rx="8.6" ry="10.2" transform="rotate(-12 22 21.5)" fill="#f28a86"/>
<ellipse cx="22.6" cy="21.2" rx="6.6" ry="7.8" transform="rotate(-12 22.6 21.2)" fill="#f5f1f0"/>
<ellipse cx="23" cy="21" rx="4.8" ry="5.6" transform="rotate(-12 23 21)" fill="#ef8582"/>
<ellipse cx="23.3" cy="20.8" rx="2.6" ry="3" transform="rotate(-12 23.3 20.8)" fill="#f8f2f0"/>
<path d="M23.8 21 L37 14.8" stroke="#e9c14a" stroke-width="1.3"/>
<path d="M32 15.5 Q34 11 38.5 12.2 Q36 14.5 36.5 15 Q39.5 15.2 38.5 18.5 Q34.5 18.8 32 15.5 Z" fill="#2fb4e0"/>
</svg>
<svg class="b" style="left:859.3px;top:152px;" width="9.4" height="8" viewBox="0 0 9.4 8" ><path d="M1 1.5 L4.7 5.2 L8.4 1.5" fill="none" stroke="#9ca3af" stroke-width="1.45" stroke-linecap="round" stroke-linejoin="round"/></svg>
<svg class="b" style="left:1511.3px;top:152px;" width="9.4" height="8" viewBox="0 0 9.4 8" ><path d="M1 1.5 L4.7 5.2 L8.4 1.5" fill="none" stroke="#9ca3af" stroke-width="1.45" stroke-linecap="round" stroke-linejoin="round"/></svg>
<svg class="b" style="left:387.3px;top:408.7px;" width="9.6" height="8" viewBox="0 0 9.6 8" ><path d="M1 1.5 L4.8 5.3 L8.6 1.5" fill="none" stroke="#9ca3af" stroke-width="1.5" stroke-linecap="round" stroke-linejoin="round"/></svg>
<svg class="b" style="left:556.8px;top:408.7px;" width="9.6" height="8" viewBox="0 0 9.6 8" ><path d="M1 1.5 L4.8 5.3 L8.6 1.5" fill="none" stroke="#9ca3af" stroke-width="1.5" stroke-linecap="round" stroke-linejoin="round"/></svg>
<svg class="b" style="left:1385px;top:59px;" width="16" height="16" viewBox="0 0 16 16" ><g transform="scale(0.62) translate(1.2 1.2)"><path d="M12 3.2 L13.6 3.4 L14.1 5.5 L15.6 6.2 L17.4 5 L18.7 6.3 L17.6 8.1 L18.3 9.8 L20.4 10.3 L20.6 12 L20.4 13.6 L18.3 14.1 L17.6 15.8 L18.8 17.6 L17.6 18.8 L15.8 17.6 L14.1 18.3 L13.6 20.4 L12 20.6 L10.4 20.4 L9.9 18.3 L8.2 17.6 L6.4 18.8 L5.2 17.6 L6.4 15.8 L5.7 14.1 L3.6 13.6 L3.4 12 L3.6 10.4 L5.7 9.9 L6.4 8.1 L5.3 6.3 L6.5 5.1 L8.3 6.3 L9.9 5.6 L10.4 3.4 Z" fill="none" stroke="#e5e7eb" stroke-width="2"/><circle cx="12" cy="12" r="3" fill="none" stroke="#e5e7eb" stroke-width="2"/></g></svg>
<svg class="b" style="left:1519px;top:60px;" width="16" height="16" viewBox="0 0 16 16" ><path d="M2.5 7.5 L13 7.5 M8.5 3 L13 7.5 L8.5 12" fill="none" stroke="#e5e7eb" stroke-width="1.6" stroke-linecap="round" stroke-linejoin="round"/></svg>
<svg class="b" style="left:600px;top:469px;" width="20" height="20" viewBox="0 0 20 20" ><circle cx="8" cy="8" r="5" fill="none" stroke="#9ca3af" stroke-width="2"/><path d="M11.7 11.7 L16 16" stroke="#9ca3af" stroke-width="2" stroke-linecap="round"/></svg>
<svg class="b" style="left:528px;top:522px;" width="10" height="6" viewBox="0 0 10 6" ><path d="M0.5 0.5 L9.5 0.5 L5 5.5 Z" fill="#aab1bd"/></svg>
<svg class="b" style="left:616.8px;top:522px;" width="10" height="6" viewBox="0 0 10 6" ><path d="M0.5 0.5 L9.5 0.5 L5 5.5 Z" fill="#aab1bd"/></svg>
<svg class="b" style="left:742.8px;top:522px;" width="10" height="6" viewBox="0 0 10 6" ><path d="M0.5 0.5 L9.5 0.5 L5 5.5 Z" fill="#aab1bd"/></svg>
<svg class="b" style="left:277px;top:556px;" width="18" height="18" viewBox="0 0 18 18" ><circle cx="9" cy="9" r="8" fill="#3b82f6"/><circle cx="9" cy="9" r="3.2" fill="#fff"/></svg>
<svg class="b" style="left:277px;top:597px;" width="18" height="18" viewBox="0 0 18 18" ><circle cx="9" cy="9" r="7.4" fill="#353e4c" stroke="#5a6373" stroke-width="1.2"/></svg>
<svg class="b" style="left:277px;top:638px;" width="18" height="18" viewBox="0 0 18 18" ><circle cx="9" cy="9" r="7.4" fill="#353e4c" stroke="#5a6373" stroke-width="1.2"/></svg>
<svg class="b" style="left:277px;top:679px;" width="18" height="18" viewBox="0 0 18 18" ><circle cx="9" cy="9" r="7.4" fill="#353e4c" stroke="#5a6373" stroke-width="1.2"/></svg>
<svg class="b" style="left:277px;top:720px;" width="18" height="18" viewBox="0 0 18 18" ><circle cx="9" cy="9" r="7.4" fill="#353e4c" stroke="#5a6373" stroke-width="1.2"/></svg>
</body></html>
